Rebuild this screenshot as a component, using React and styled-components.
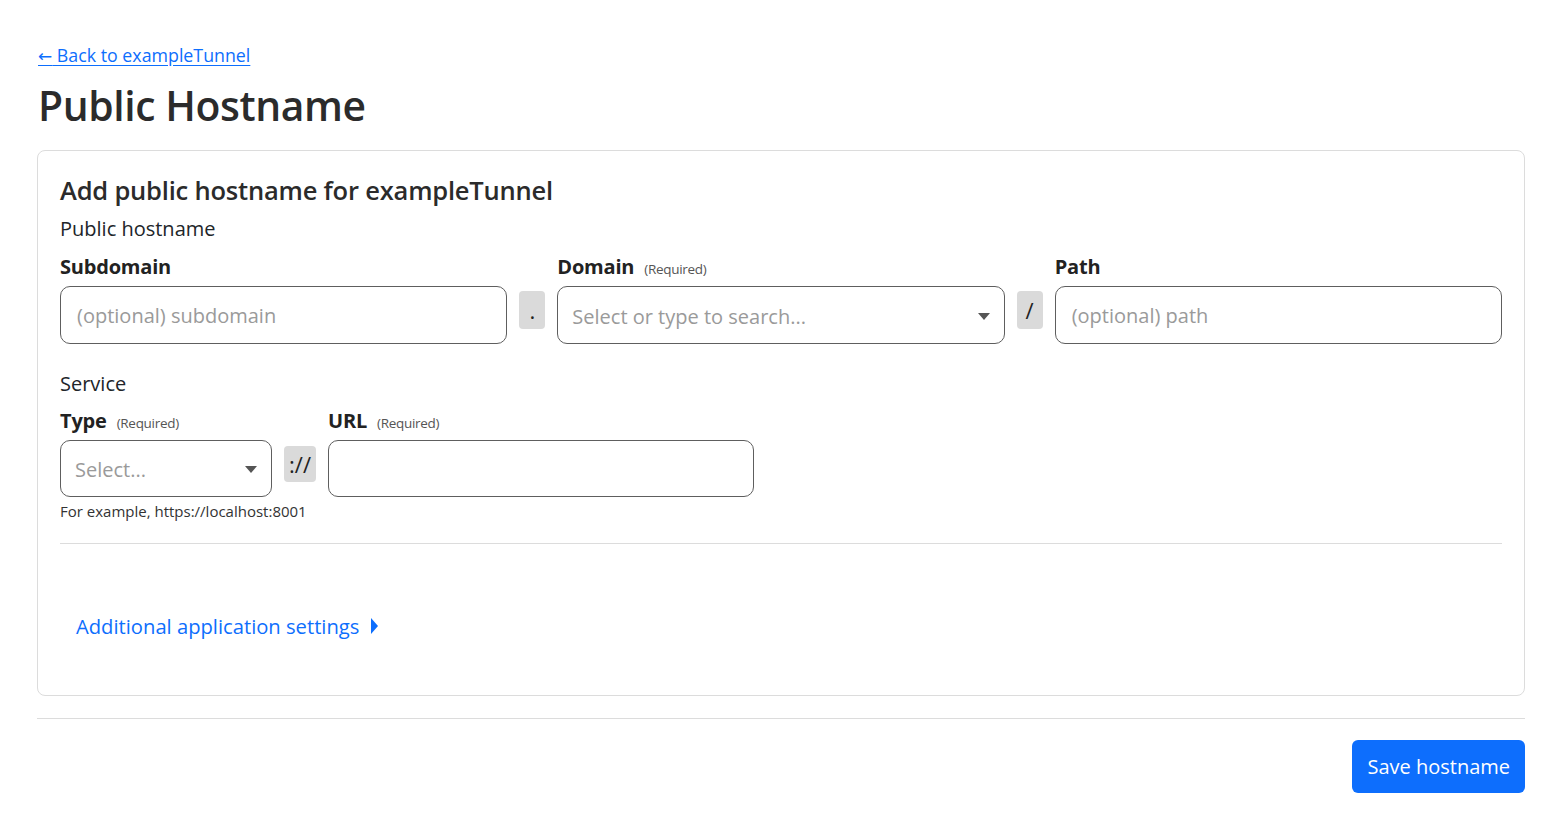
import styled, { createGlobalStyle } from "styled-components";

const GlobalStyle = createGlobalStyle`
  body {
    margin: 0;
    background: #fff;
    font-family: "Open Sans", "Noto Sans", sans-serif;
    color: #212529;
  }
  * { box-sizing: border-box; }
`;

const Page = styled.div`
  padding: 42px 22px 40px 37px;
`;

const BackLink = styled.a`
  display: inline-block;
  margin-left: 1px;
  color: #0d6efd;
  font-size: 17.8px;
  line-height: 26px;
  text-decoration: underline;
  text-underline-offset: 3px;
`;

const Arrow = styled.span`
  font-family: "DejaVu Sans", sans-serif;
  font-size: 17px;
`;

const Title = styled.h1`
  margin: 12px 0 21px 1px;
  font-size: 40.8px;
  line-height: 48px;
  font-weight: 600;
  color: #2b2b2b;
  letter-spacing: -0.4px;
`;

const Card = styled.section`
  border: 1px solid #dcdcdc;
  border-radius: 8px;
  padding: 23px 22px 0;
  height: 546px;
`;

const CardTitle = styled.h2`
  margin: 0 0 8px;
  font-size: 25.5px;
  line-height: 32px;
  font-weight: 600;
  color: #2b2b2b;
  letter-spacing: -0.2px;
`;

const Section = styled.div`
  font-size: 20px;
  line-height: 30px;
  margin-top: ${(p) => p.$mt || 0}px;
  margin-bottom: ${(p) => p.$mb || 8}px;
`;

const Row = styled.div`
  display: grid;
  grid-template-columns: ${(p) => p.$cols};
  justify-content: start;
  column-gap: 12px;
  align-items: start;
`;

const Field = styled.div`
  display: flex;
  flex-direction: column;
`;

const Label = styled.div`
  display: flex;
  align-items: baseline;
  gap: 10px;
  height: 30px;
  font-size: 20px;
  line-height: 30px;
  font-weight: 700;
  color: #222;
  margin-bottom: 4px;
  letter-spacing: -0.2px;
`;

const Req = styled.span`
  font-size: 13.5px;
  line-height: 20px;
  font-weight: 400;
  color: #555;
  letter-spacing: -0.3px;
`;

const Input = styled.input`
  width: 100%;
  height: ${(p) => p.$h || 58}px;
  border: 1px solid #5e5e5e;
  border-radius: 10px;
  padding: 0 16px;
  font-family: inherit;
  font-size: 20px;
  color: #212529;
  outline: none;
  &::placeholder {
    color: #9a9a9a;
  }
`;

const SelectBox = styled.div`
  height: ${(p) => p.$h || 58}px;
  border: 1px solid #5e5e5e;
  border-radius: 10px;
  padding: 2px 14px 0;
  display: flex;
  align-items: center;
  justify-content: space-between;
  font-size: 20px;
  color: #9a9a9a;
`;

const Caret = styled.span`
  width: 0;
  height: 0;
  border-left: 6px solid transparent;
  border-right: 6px solid transparent;
  border-top: 7px solid #555;
`;

const Sep = styled.div`
  margin-top: ${(p) => p.$top}px;
  width: ${(p) => p.$w || 26}px;
  height: ${(p) => p.$h || 38}px;
  background: #dadada;
  border-radius: 4px;
  display: flex;
  align-items: center;
  justify-content: center;
  font-size: 22px;
  color: #222;
`;

const Help = styled.div`
  margin-top: 4px;
  font-size: 15px;
  line-height: 20px;
  color: #333;
  white-space: nowrap;
`;

const Divider = styled.hr`
  border: 0;
  border-top: 1px solid #dcdcdc;
  margin: ${(p) => p.$m};
`;

const Toggle = styled.button`
  border: 0;
  background: none;
  padding: 0 16px;
  display: flex;
  align-items: center;
  gap: 12px;
  font-family: inherit;
  font-size: 20.2px;
  color: #0d6efd;
  cursor: pointer;
`;

const RightCaret = styled.span`
  width: 0;
  height: 0;
  border-top: 8px solid transparent;
  border-bottom: 8px solid transparent;
  border-left: 7px solid #0d6efd;
`;

const Footer = styled.div`
  display: flex;
  justify-content: flex-end;
`;

const SaveButton = styled.button`
  height: 53px;
  padding: 0 15px;
  border: 0;
  border-radius: 6px;
  background: #0d6efd;
  color: #fff;
  font-family: inherit;
  font-size: 20px;
  cursor: pointer;
`;

export default function App() {
  return (
    <>
      <GlobalStyle />
      <Page>
        <BackLink href="#">
          <Arrow>←</Arrow> Back to exampleTunnel
        </BackLink>
        <Title>Public Hostname</Title>
        <Card>
          <CardTitle>Add public hostname for exampleTunnel</CardTitle>
          <Section>Public hostname</Section>
          <Row $cols="1fr 26px 1fr 26px 1fr">
            <Field>
              <Label>Subdomain</Label>
              <Input placeholder="(optional) subdomain" />
            </Field>
            <Sep $top={39}>.</Sep>
            <Field>
              <Label>
                Domain <Req>(Required)</Req>
              </Label>
              <SelectBox>
                Select or type to search...
                <Caret />
              </SelectBox>
            </Field>
            <Sep $top={39}>/</Sep>
            <Field>
              <Label>Path</Label>
              <Input placeholder="(optional) path" />
            </Field>
          </Row>
          <Section $mt={25} $mb={7}>
            Service
          </Section>
          <Row $cols="212px 32px 426px">
            <Field>
              <Label>
                Type <Req>(Required)</Req>
              </Label>
              <SelectBox $h={57}>
                Select...
                <Caret />
              </SelectBox>
              <Help>For example, https://localhost:8001</Help>
            </Field>
            <Sep $top={40} $h={36} $w={32}>
              ://
            </Sep>
            <Field>
              <Label>
                URL <Req>(Required)</Req>
              </Label>
              <Input $h={57} />
            </Field>
          </Row>
          <Divider $m="22px 0 68px" />
          <Toggle>
            Additional application settings
            <RightCaret />
          </Toggle>
        </Card>
        <Divider $m="22px 0 21px" />
        <Footer>
          <SaveButton>Save hostname</SaveButton>
        </Footer>
      </Page>
    </>
  );
}
